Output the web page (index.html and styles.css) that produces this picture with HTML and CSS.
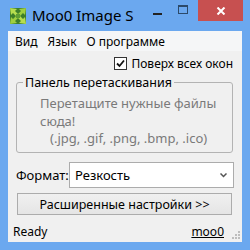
FILE: index.html
```html
<!DOCTYPE html>
<html>
<head>
<meta charset="utf-8">
<link rel="stylesheet" href="styles.css">
</head>
<body>
<div class="window">
  <div class="titlebar">
    <svg class="app-icon" width="16" height="16" viewBox="0 0 16 16">
      <rect x="0" y="0" width="16" height="16" fill="#3f7f2a"/>
      <polygon points="0,0 7,1 5,3 8,6 6,8 3,5 1,7" fill="#b6dd4e"/>
      <polygon points="16,0 15,7 13,5 10,8 8,6 11,3 9,1" fill="#9fcf3f"/>
      <polygon points="16,16 9,15 11,13 8,10 10,8 13,11 15,9" fill="#b6dd4e"/>
      <polygon points="0,16 1,9 3,11 6,8 8,10 5,13 7,15" fill="#9fcf3f"/>
      <rect x="6" y="6" width="4" height="4" fill="#5f9e33"/>
    </svg>
    <span class="title">Moo0 Image S</span>
    <div class="controls">
      <span class="ctl ctl-min"><span class="min-bar"></span></span>
      <span class="ctl ctl-max"><span class="max-box"></span></span>
      <span class="ctl ctl-close">
        <svg width="10" height="8" viewBox="0 0 10 8"><path d="M1.5 0.5 L8.5 7.5 M8.5 0.5 L1.5 7.5" stroke="#fff" stroke-width="2"/></svg>
      </span>
    </div>
  </div>
  <div class="client">
    <div class="menubar">
      <span class="menu-item">Вид</span>
      <span class="menu-item">Язык</span>
      <span class="menu-item">О программе</span>
    </div>
    <div class="content">
      <div class="check-row">
        <span class="checkbox">
          <svg width="11" height="11" viewBox="0 0 11 11"><path d="M2 5.5 L4.5 8 L9 2.5" stroke="#111" stroke-width="1.8" fill="none"/></svg>
        </span>
        <span class="check-label">Поверх всех окон</span>
      </div>
      <fieldset class="group">
        <legend class="group-title">Панель перетаскивания</legend>
        <div class="drop-text">
          <div>Перетащите нужные файлы</div>
          <div>сюда!</div>
          <div class="ext">(.jpg, .gif, .png, .bmp, .ico)</div>
        </div>
      </fieldset>
      <div class="format-row">
        <span class="format-label">Формат:</span>
        <div class="select">
          <span class="select-value">Резкость</span>
          <svg class="chev" width="7" height="5" viewBox="0 0 7 5"><path d="M0.5 0.5 L3.5 3.5 L6.5 0.5" stroke="#555" stroke-width="1.5" fill="none"/></svg>
        </div>
      </div>
      <div class="button">Расширенные настройки &gt;&gt;</div>
    </div>
    <div class="statusbar">
      <span class="status-text">Ready</span>
      <span class="status-link">moo0</span>
      <svg class="grip" width="9" height="9" viewBox="0 0 9 9">
        <rect x="7" y="1" width="2" height="2" fill="#bdbdbd"/>
        <rect x="4" y="4" width="2" height="2" fill="#bdbdbd"/>
        <rect x="7" y="4" width="2" height="2" fill="#bdbdbd"/>
        <rect x="1" y="7" width="2" height="2" fill="#bdbdbd"/>
        <rect x="4" y="7" width="2" height="2" fill="#bdbdbd"/>
        <rect x="7" y="7" width="2" height="2" fill="#bdbdbd"/>
      </svg>
    </div>
  </div>
</div>
</body>
</html>
```
FILE: styles.css
```css
* { box-sizing: border-box; }
html, body {
  margin: 0;
  padding: 0;
  width: 250px;
  height: 250px;
  overflow: hidden;
}
body {
  font-family: "Noto Sans", "Open Sans", sans-serif;
  color: #000;
}
.window {
  width: 250px;
  height: 250px;
  background: #6ba8ef;
  display: flex;
  flex-direction: column;
}
.titlebar {
  height: 31px;
  display: flex;
  align-items: flex-start;
  flex-shrink: 0;
}
.app-icon {
  margin: 8px 0 0 10px;
  flex-shrink: 0;
}
.title {
  margin: 5px 0 0 6px;
  font-size: 15px;
  line-height: 20px;
  color: #000;
  white-space: nowrap;
}
.controls {
  margin-left: auto;
  margin-right: 7px;
  display: flex;
  align-items: flex-start;
}
.ctl {
  height: 21px;
  display: flex;
  align-items: center;
  justify-content: center;
}
.ctl-min { width: 26px; }
.min-bar {
  width: 9px;
  height: 2px;
  background: #222;
  margin-top: 6px;
}
.ctl-max { width: 26px; }
.max-box {
  width: 10px;
  height: 9px;
  border: 1px solid #2c4a6a;
  border-top-width: 2px;
  margin-top: -2px;
}
.ctl-close {
  width: 45px;
  background: #c75050;
  margin-left: 2px;
}
.client {
  margin-left: 8px;
  width: 234px;
  height: 211px;
  background: #f0f0f0;
  display: flex;
  flex-direction: column;
}
.menubar {
  height: 20px;
  display: flex;
  align-items: center;
  padding-left: 7px;
  font-size: 12px;
  background: #f5f6f7;
}
.menu-item { margin-right: 10px; }
.content {
  padding: 0 9px 0 8px;
  display: flex;
  flex-direction: column;
}
.check-row {
  margin-top: 5px;
  height: 14px;
  display: flex;
  justify-content: flex-end;
  align-items: center;
  font-size: 12px;
}
.checkbox {
  width: 13px;
  height: 13px;
  border: 1px solid #333;
  background: #fff;
  display: flex;
  align-items: center;
  justify-content: center;
  margin-right: 4px;
}
.group {
  margin: 4px 0 0 0;
  padding: 0;
  border: 1px solid #b3b3b3;
  border-radius: 3px;
  height: 79px;
}
.group-title {
  margin-left: 6px;
  padding: 0 2px;
  font-size: 12.5px;
  line-height: 17px;
}
.drop-text {
  padding: 4px 0 0 23px;
  font-size: 13px;
  line-height: 17.5px;
  color: #7a7a7a;
}
.ext { padding-left: 10px; }
.format-row {
  margin-top: 9px;
  display: flex;
  align-items: center;
  margin-right: -1px;
}
.format-label {
  font-size: 13px;
  width: 53px;
  flex-shrink: 0;
  white-space: nowrap;
}
.select {
  flex: 1;
  height: 26px;
  background: #fff;
  border: 1px solid #acacac;
  display: flex;
  align-items: center;
  padding: 0 6px 0 5px;
  font-size: 13px;
}
.chev { margin-left: auto; }
.button {
  margin: 5px 1px 0 1px;
  height: 22px;
  border: 1px solid #acacac;
  background: linear-gradient(#f0f0f0, #e5e5e5);
  font-size: 12.5px;
  display: flex;
  align-items: center;
  justify-content: center;
}
.statusbar {
  margin-top: auto;
  height: 22px;
  display: flex;
  align-items: center;
  padding: 0 2px 0 5px;
  font-size: 12px;
}
.status-link {
  margin-left: auto;
  text-decoration: underline;
  margin-right: 7px;
}
.grip { margin-top: 6px; }
```
